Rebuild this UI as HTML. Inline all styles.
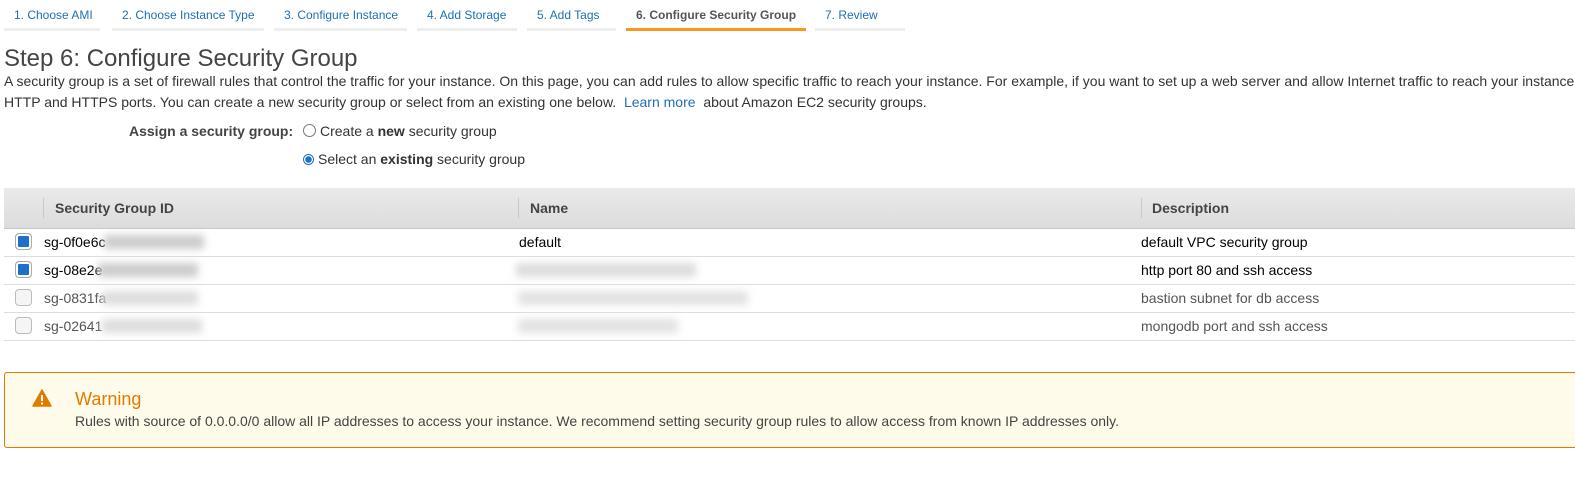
<!DOCTYPE html>
<html><head><meta charset="utf-8"><style>
html,body{margin:0;width:1575px;height:482px;overflow:hidden}
body{background:#fff;font-family:"Liberation Sans",Arial,sans-serif;color:#333;position:relative}
.a{position:absolute;white-space:nowrap}
.tab{position:absolute;top:0;height:31px;border-bottom:3px solid #eee;font-size:12px;color:#1f6fb5;line-height:30px;padding-left:10px;box-sizing:border-box}
.tab.on{border-bottom-color:#f7981c;color:#555;font-weight:bold}
.hdr{position:absolute;left:4px;top:188px;width:1571px;height:40px;background:linear-gradient(#eaeaea,#dcdcdc);border-bottom:1px solid #c8c8c8}
.sep{position:absolute;top:10px;width:1px;height:20px;background:#c8c8c8}
.hd{position:absolute;top:12px;font-size:14px;font-weight:bold;color:#444}
.row{position:absolute;left:4px;width:1571px;height:27px;border-bottom:1px solid #ddd;font-size:14px}
.cb{position:absolute;left:11px;top:4px;width:17px;height:17px;border:1px solid #bbb;border-radius:4px;background:#f5f5f5;box-sizing:border-box}
.cb.c{background:#1e6fc9;border-color:#aaa;box-shadow:inset 0 0 0 2px #fff}
.blur{position:absolute;top:6px;height:14px;background:#ccc;filter:blur(4px)}
</style></head><body>
<div class="tab" style="left:4px;width:96px">1. Choose AMI</div>
<div class="tab" style="left:112px;width:152px">2. Choose Instance Type</div>
<div class="tab" style="left:274px;width:133px">3. Configure Instance</div>
<div class="tab" style="left:417px;width:100px">4. Add Storage</div>
<div class="tab" style="left:527px;width:89px">5. Add Tags</div>
<div class="tab on" style="left:626px;width:180px">6. Configure Security Group</div>
<div class="tab" style="left:815px;width:90px">7. Review</div>

<div class="a" style="left:4px;top:45px;font-size:24px;color:#444">Step 6: Configure Security Group</div>
<div class="a" style="left:4px;top:71px;width:1571px;overflow:hidden;font-size:14px;line-height:21px">A security group is a set of firewall rules that control the traffic for your instance. On this page, you can add rules to allow specific traffic to reach your instance. For example, if you want to set up a web server and allow Internet traffic to reach your instance, add rules that allow unrestricted access to the<br>HTTP and HTTPS ports. You can create a new security group or select from an existing one below. <span style="color:#1f6fb5">&nbsp;Learn more&nbsp;</span> about Amazon EC2 security groups.</div>
<div class="a" style="left:129px;top:123px;font-size:14px;font-weight:bold;color:#444">Assign a security group:</div>
<div class="a" style="left:303px;top:123px;font-size:14px"><span style="display:inline-block;width:11px;height:11px;border:1px solid #777;border-radius:50%;vertical-align:-1px;margin-right:4px"></span>Create a <b>new</b> security group</div>
<div class="a" style="left:303px;top:151px;font-size:14px"><span style="display:inline-block;width:11px;height:11px;border:1px solid #1e6fc9;border-radius:50%;vertical-align:-1px;margin-right:4px;box-sizing:border-box;background:radial-gradient(#1e6fc9 3px,#fff 3.5px)"></span>Select an <b>existing</b> security group</div>

<div class="hdr">
<div class="sep" style="left:39px"></div><div class="hd" style="left:51px">Security Group ID</div>
<div class="sep" style="left:514px"></div><div class="hd" style="left:526px">Name</div>
<div class="sep" style="left:1137px"></div><div class="hd" style="left:1148px">Description</div>
</div>

<div class="row" style="top:229px;color:#000"><div class="cb c"></div><span class="a" style="left:40px;top:5px">sg-0f0e6c</span><div class="blur" style="left:100px;width:100px"></div><span class="a" style="left:515px;top:5px">default</span><span class="a" style="left:1137px;top:5px">default VPC security group</span></div>
<div class="row" style="top:257px;color:#000"><div class="cb c"></div><span class="a" style="left:40px;top:5px">sg-08e2e</span><div class="blur" style="left:94px;width:100px"></div><div class="blur" style="left:512px;width:180px;background:#ddd"></div><span class="a" style="left:1137px;top:5px">http port 80 and ssh access</span></div>
<div class="row" style="top:285px;color:#555"><div class="cb"></div><span class="a" style="left:40px;top:5px">sg-0831fa</span><div class="blur" style="left:98px;width:96px;background:#ddd"></div><div class="blur" style="left:514px;width:230px;background:#e2e2e2"></div><span class="a" style="left:1137px;top:5px">bastion subnet for db access</span></div>
<div class="row" style="top:313px;color:#555"><div class="cb"></div><span class="a" style="left:40px;top:5px">sg-02641</span><div class="blur" style="left:98px;width:100px;background:#ddd"></div><div class="blur" style="left:514px;width:160px;background:#e2e2e2"></div><span class="a" style="left:1137px;top:5px">mongodb port and ssh access</span></div>

<div style="position:absolute;left:4px;top:372px;width:1575px;height:76px;box-sizing:border-box;border:1px solid #e07b00;border-radius:3px;background:#fffbea">
<svg style="position:absolute;left:27px;top:16px" width="20" height="18" viewBox="0 0 20 18"><path d="M10 1L19 17H1Z" fill="#e07b00" stroke="#e07b00" stroke-linejoin="round" stroke-width="1.5"/><rect x="9" y="6" width="2" height="6" fill="#fff"/><rect x="9" y="13.5" width="2" height="2" fill="#fff"/></svg>
<div class="a" style="left:70px;top:16px;font-size:18px;color:#e07b00">Warning</div>
<div class="a" style="left:70px;top:40px;font-size:14px;color:#444">Rules with source of 0.0.0.0/0 allow all IP addresses to access your instance. We recommend setting security group rules to allow access from known IP addresses only.</div>
</div>
</body></html>
